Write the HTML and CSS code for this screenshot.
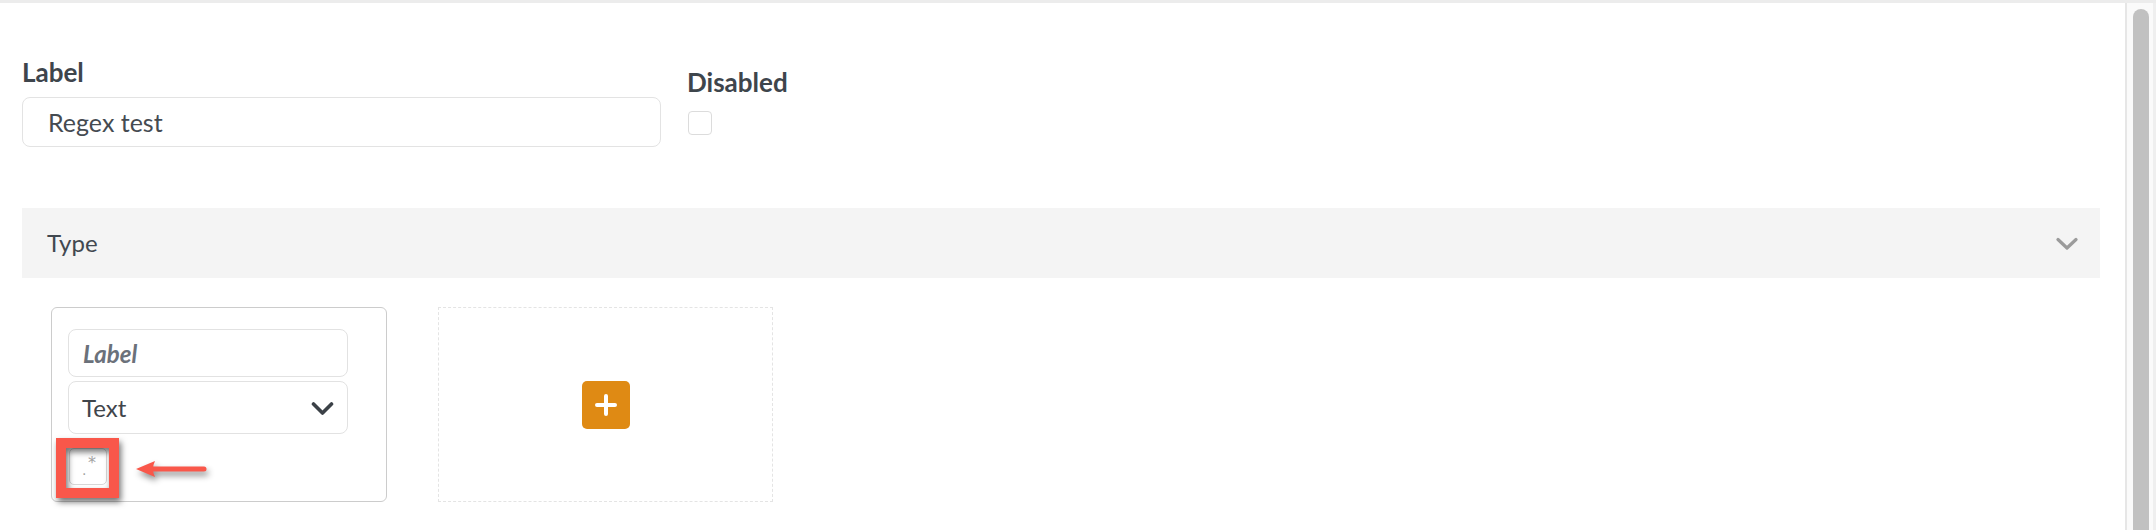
FILE: index.html
```html
<!DOCTYPE html>
<html lang="en">
<head>
  <meta charset="UTF-8">
  <title>Field editor - Regex test</title>
  <link rel="stylesheet" href="styles.css">
</head>
<body>
  <div class="frame">
    <main class="editor">
      <div class="field-row">
        <div class="field field-label">
          <label for="fieldLabel">Label</label>
          <input type="text" id="fieldLabel" class="text-input" value="Regex test">
        </div>
        <div class="field field-disabled">
          <label for="fieldDisabled">Disabled</label>
          <span class="checkbox" id="fieldDisabled"></span>
        </div>
      </div>

      <div class="section-bar">
        <span>Type</span>
        <svg class="bar-chevron" width="22" height="14" viewBox="0 0 22 14">
          <polyline points="2,2.5 11,11 20,2.5" fill="none" stroke="#9b9b9b" stroke-width="3.2" stroke-linecap="round" stroke-linejoin="round"/>
        </svg>
      </div>

      <div class="items">
        <div class="item-card">
          <div class="card-input placeholder">Label</div>
          <div class="card-select">
            <span>Text</span>
            <svg width="23" height="15" viewBox="0 0 23 15">
              <polyline points="2.5,3 11.5,12 20.5,3" fill="none" stroke="#3b4147" stroke-width="3.6" stroke-linecap="round" stroke-linejoin="round"/>
            </svg>
          </div>
          <div class="regex-row">
            <span class="regex-toggle"><span class="dot">.</span><span class="star">*</span></span>
            <svg class="callout-arrow" width="72" height="22" viewBox="0 0 72 22">
              <path d="M14 11 H68" stroke="#f9574a" stroke-width="5" stroke-linecap="round"/>
              <path d="M0 11 L19 3 Q15 11 19 19 Z" fill="#f9574a"/>
            </svg>
          </div>
        </div>

        <div class="add-tile">
          <button class="add-btn" type="button">
            <svg width="24" height="24" viewBox="0 0 24 24">
              <path d="M12 3 V21 M3 12 H21" stroke="#fff" stroke-width="4" stroke-linecap="round"/>
            </svg>
          </button>
        </div>
      </div>
    </main>

    <div class="scrollbar">
      <div class="thumb"></div>
    </div>
  </div>
</body>
</html>
```

FILE: styles.css
```css
    html, body {
      margin: 0;
      height: 100%;
      overflow: hidden;
    }

    body {
      font-family: Lato, "Open Sans", sans-serif;
      background: #ffffff;
      color: #3e454c;
    }

    .frame {
      display: flex;
      height: 100%;
      border-top: 3px solid #ececec;
      box-sizing: border-box;
    }

    .editor {
      flex: 1;
      padding: 55px 25px 0 22px;
    }

    /* top fields */
    .field-row {
      display: flex;
      align-items: flex-start;
      gap: 24px;
    }

    .field label {
      display: block;
      font-size: 26px;
      line-height: 29px;
      font-weight: 700;
      color: #3e454c;
    }

    .field-label {
      width: 639px;
    }

    .field-label label {
      margin-bottom: 10px;
    }

    .text-input {
      width: 100%;
      height: 50px;
      box-sizing: border-box;
      border: 1px solid #e3e3e3;
      border-radius: 8px;
      padding: 0 25px;
      font-family: inherit;
      font-size: 25px;
      color: #454b51;
      outline: none;
    }

    .field-disabled {
      margin-top: 10px;
      padding-left: 3px;
    }

    .field-disabled label {
      margin-left: -1px;
      margin-bottom: 14px;
    }

    .checkbox {
      display: block;
      width: 24px;
      height: 24px;
      box-sizing: border-box;
      border: 1px solid #dcdcdc;
      border-radius: 4px;
    }

    /* collapsible bar */
    .section-bar {
      margin-top: 61px;
      height: 70px;
      background: #f4f4f4;
      display: flex;
      align-items: center;
      justify-content: space-between;
      padding: 0 22px 2px 25px;
      box-sizing: border-box;
      font-size: 24px;
      color: #414850;
    }

    .bar-chevron {
      margin-top: 4px;
    }

    /* items */
    .items {
      display: flex;
      align-items: flex-start;
      gap: 51px;
      margin-top: 29px;
      padding-left: 29px;
    }

    .item-card {
      width: 336px;
      height: 195px;
      box-sizing: border-box;
      border: 1px solid #cccccc;
      border-radius: 6px;
      padding: 21px 16px 0;
      display: flex;
      flex-direction: column;
      gap: 4px;
    }

    .item-card > * {
      flex-shrink: 0;
    }

    .card-input,
    .card-select {
      width: 280px;
      box-sizing: border-box;
      border: 1px solid #e2e2e2;
      border-radius: 8px;
      display: flex;
      align-items: center;
    }

    .card-input {
      height: 48px;
      padding-left: 14px;
    }

    .placeholder {
      font-size: 24px;
      font-weight: 700;
      font-style: italic;
      color: #6b717a;
    }

    .card-select {
      height: 53px;
      padding: 0 13px 0 13px;
      justify-content: space-between;
      font-size: 24px;
      color: #3f454b;
    }

    .card-select svg {
      margin-top: 2px;
    }

    .regex-row {
      display: flex;
      align-items: center;
      gap: 29px;
      margin-top: 10px;
      margin-left: 1px;
    }

    .regex-toggle {
      position: relative;
      width: 38px;
      height: 37px;
      box-sizing: border-box;
      border: 1px solid #d8d8d8;
      border-radius: 5px;
      font-family: "DejaVu Sans", sans-serif;
      color: #a3a3a3;
      line-height: 1;
    }

    .regex-toggle .dot {
      position: absolute;
      left: 12px;
      top: 14px;
      font-size: 14px;
    }

    .regex-toggle .star {
      position: absolute;
      left: 18px;
      top: 6px;
      font-size: 16px;
    }

    /* screenshot annotation around the toggle */
    .regex-toggle::after {
      content: "";
      position: absolute;
      top: -11px;
      left: -14px;
      right: -13px;
      bottom: -14px;
      border: 10px solid #f9574a;
      filter: drop-shadow(2px 4px 3px rgba(0, 0, 0, 0.55));
    }

    .callout-arrow {
      margin-top: 4px;
      filter: drop-shadow(2px 4px 3px rgba(0, 0, 0, 0.45));
    }

    .add-tile {
      width: 335px;
      height: 195px;
      box-sizing: border-box;
      border: 1px dashed #e4e4e4;
      display: flex;
      align-items: center;
      justify-content: center;
    }

    .add-btn {
      width: 48px;
      height: 48px;
      border: none;
      border-radius: 5px;
      background: #df8a14;
      padding: 0;
      display: flex;
      align-items: center;
      justify-content: center;
      cursor: pointer;
    }

    /* fake scrollbar column */
    .scrollbar {
      width: 31px;
      box-sizing: border-box;
      border-left: 2px solid #e6e6e6;
      border-right: 3px solid #efefef;
      background: #fafafa;
      padding: 6px 0 0 6px;
    }

    .thumb {
      width: 16px;
      height: 100%;
      background: #c1c1c1;
      border-radius: 8px 8px 0 0;
    }
```
